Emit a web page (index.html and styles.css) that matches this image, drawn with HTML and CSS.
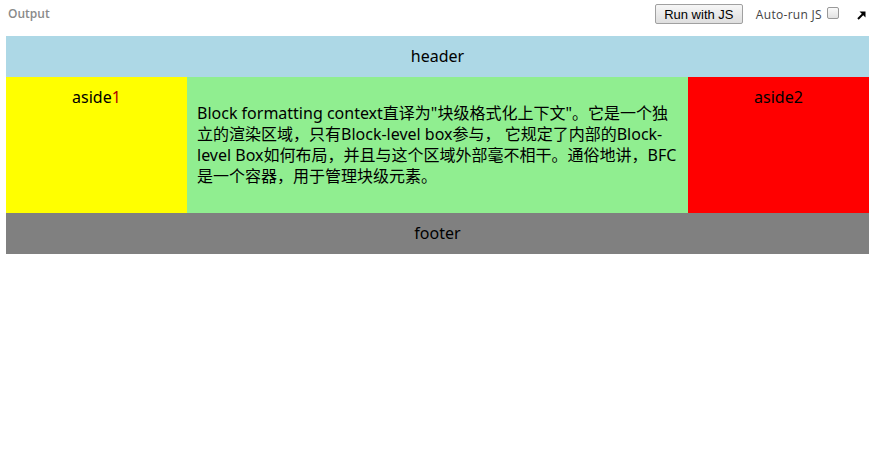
FILE: index.html
```html
<!DOCTYPE html>
<html>
<head>
<meta charset="utf-8">
<link rel="stylesheet" href="styles.css">
</head>
<body>
<div class="topbar">
  <span class="output">Output</span>
  <div class="controls">
    <button class="run">Run with JS</button>
    <span class="auto">Auto-run JS</span>
    <span class="check"></span>
    <svg class="arrow" width="9" height="9" viewBox="0 0 9 9"><path d="M1 8 L7 2" stroke="#000" stroke-width="2"/><path d="M2.5 0.5 H8.5 V6.5 Z" fill="#000"/></svg>
  </div>
</div>
<div class="page">
  <div class="header">header</div>
  <div class="middle">
    <div class="aside1">aside<span class="red">1</span></div>
    <div class="main"><p>Block formatting context直译为"块级格式化上下文"。它是一个独立的渲染区域，只有Block-level box参与， 它规定了内部的Block-level Box如何布局，并且与这个区域外部毫不相干。通俗地讲，BFC是一个容器，用于管理块级元素。</p></div>
    <div class="aside2">aside2</div>
  </div>
  <div class="footer">footer</div>
</div>
</body>
</html>
```
FILE: styles.css
```css
html, body { margin: 0; padding: 0; background: #fff; }
body { font-family: "Open Sans", "Noto Sans CJK SC", sans-serif; }
.topbar {
  height: 36px;
  display: flex;
  justify-content: space-between;
  align-items: flex-start;
}
.output {
  margin: 5px 0 0 8px;
  font-family: "Open Sans", sans-serif;
  font-size: 12px;
  font-weight: 600;
  color: #8a8a8a;
}
.controls {
  display: flex;
  align-items: flex-start;
  margin-top: 4px;
  margin-right: 6px;
}
.run {
  width: 88px;
  height: 20px;
  padding: 0;
  font-family: "Liberation Sans", Arial, sans-serif;
  font-size: 13px;
  color: #000;
  background: linear-gradient(#f6f6f6, #dedede);
  border: 1px solid #a0a0a0;
  border-radius: 2px;
}
.auto {
  margin-left: 13px;
  margin-top: 2px;
  font-family: "Open Sans", sans-serif;
  font-size: 12px;
  letter-spacing: 0.3px;
  color: #444;
}
.check {
  display: block;
  width: 10px;
  height: 10px;
  margin-left: 5px;
  margin-top: 3px;
  border: 1px solid #999;
  border-radius: 2px;
  background: linear-gradient(#fafafa, #e2e2e2);
}
.arrow { margin-left: 18px; margin-top: 7px; }
.page {
  margin: 0 3px 0 6px;
  font-family: "Noto Sans", "Noto Sans CJK SC", sans-serif;
  font-size: 16px;
  line-height: 21px;
  color: #000;
}
.header { background: #add8e6; padding: 10px; text-align: center; }
.footer { background: #808080; padding: 10px; text-align: center; }
.middle { display: flex; }
.aside1 { width: 181px; background: #ffff00; padding: 10px; box-sizing: border-box; text-align: center; }
.aside2 { width: 181px; background: #ff0000; padding: 10px; box-sizing: border-box; text-align: center; }
.red { color: #b00000; }
.main { flex: 1; background: #90ee90; padding: 10px; }
.main p { margin: 16px 0; }
```
